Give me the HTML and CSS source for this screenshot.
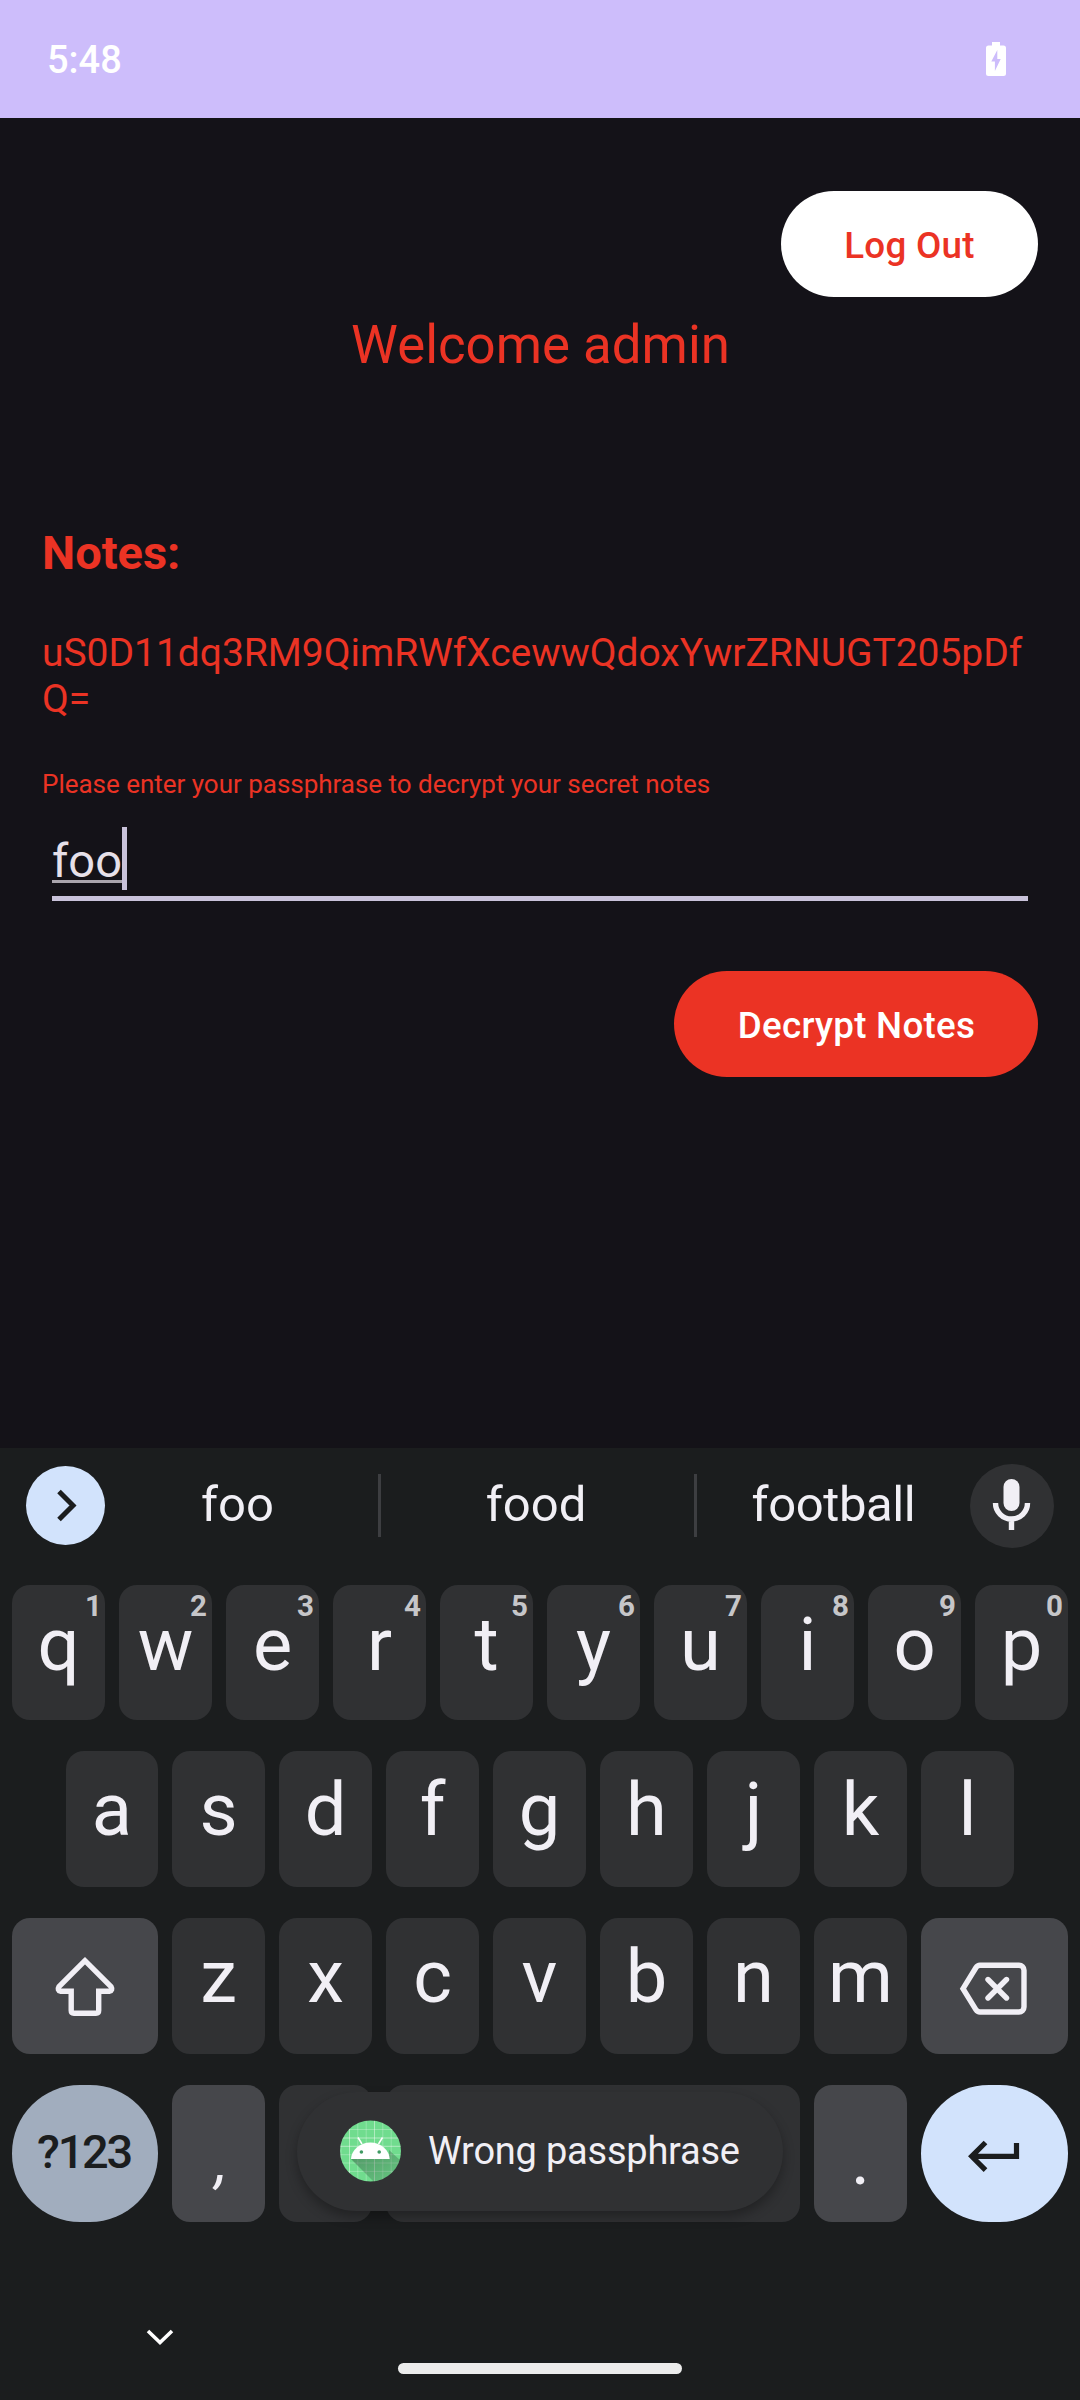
FILE: index.html
```
<!DOCTYPE html>
<html lang="en">
<head>
<meta charset="utf-8">
<title>Notes</title>
<link rel="stylesheet" href="styles.css">
</head>
<body>
<div class="status">
  <span class="clock">5:48</span>
  <svg class="battery" width="20" height="34" viewBox="0 0 20 34"><path fill="#fff" fill-rule="evenodd" d="M6 0h8v3.400h3.500a2.500 2.500 0 0 1 2.500 2.500v25.600a2.500 2.500 0 0 1-2.500 2.500h-15a2.500 2.500 0 0 1-2.500-2.500V5.900a2.500 2.500 0 0 1 2.500-2.500H6zM11.300 8L5.300 19.600h3.600V29l5.800-12h-3.400z"/></svg>
</div>
<main class="app">
  <button class="btn logout">Log Out</button>
  <h1 class="welcome">Welcome admin</h1>
  <h2 class="heading">Notes:</h2>
  <p class="note">uS0D11dq3RM9QimRWfXcewwQdoxYwrZRNUGT205pDfQ=</p>
  <p class="help">Please enter your passphrase to decrypt your secret notes</p>
  <div class="field"><span class="typed">foo</span><span class="caret"></span></div>
  <button class="btn decrypt">Decrypt Notes</button>
</main>
<section class="keyboard">
  <div class="suggest">
    <div class="more"><svg width="79" height="79" viewBox="0 0 79 79"><path d="M33 25.500L47 39.500L33 53.500" fill="none" stroke="#1b1d1e" stroke-width="5"/></svg></div>
    <span class="word w1">foo</span><i class="bar"></i><span class="word w2">food</span><i class="bar"></i><span class="word w3">football</span>
    <div class="mic"><svg width="84" height="84" viewBox="0 0 84 84"><rect x="33.500" y="15" width="16" height="32" rx="8" fill="#f1eff5"/><path d="M25.500 39a16 16 0 0 0 32 0M41.500 55v11" fill="none" stroke="#f1eff5" stroke-width="5.400"/></svg></div>
  </div>
  <div class="row top">
    <div class="key">q<sup>1</sup></div><div class="key">w<sup>2</sup></div><div class="key">e<sup>3</sup></div><div class="key">r<sup>4</sup></div><div class="key">t<sup>5</sup></div><div class="key">y<sup>6</sup></div><div class="key">u<sup>7</sup></div><div class="key">i<sup>8</sup></div><div class="key">o<sup>9</sup></div><div class="key">p<sup>0</sup></div>
  </div>
  <div class="row home">
    <div class="key">a</div><div class="key">s</div><div class="key">d</div><div class="key">f</div><div class="key">g</div><div class="key">h</div><div class="key">j</div><div class="key">k</div><div class="key">l</div>
  </div>
  <div class="row">
    <div class="key mod wide"><svg width="146" height="136" viewBox="0 0 146 136"><path d="M73 42.700L47 68.700q-2 3.500 1.500 4.500H59.200V92.500q0 2.700 2.700 2.700H84q2.700 0 2.700-2.700V73.200H97.500q3.500-1 1.500-4.500z" fill="none" stroke="#f1eff5" stroke-width="5.400"/></svg></div><div class="key">z</div><div class="key">x</div><div class="key">c</div><div class="key">v</div><div class="key">b</div><div class="key">n</div><div class="key">m</div><div class="key mod wide right"><svg width="147" height="136" viewBox="0 0 147 136"><path d="M59 47.300H98a5 5 0 0 1 5 5V89a5 5 0 0 1-5 5H59a5 5 0 0 1-4-2.200L42 70.700l13-21.200a5 5 0 0 1 4-2.200zM67 61.500L85.500 80M85.500 61.500L67 80" fill="none" stroke="#f1eff5" stroke-width="5.400" stroke-linecap="round"/></svg></div>
  </div>
  <div class="row">
    <div class="key wide sym">?123</div><div class="key mod comma">,</div><div class="key"></div><div class="key space"></div><div class="key mod punct">.</div><div class="key wide right enter"><svg width="147" height="137" viewBox="0 0 147 137"><path d="M95.500 58v13.300H52M64.500 57.500L50.700 71.300L64.500 85.100" fill="none" stroke="#1b1d1e" stroke-width="5.200"/></svg></div>
  </div>
  <div class="nav">
    <svg class="hide" width="28" height="18" viewBox="0 0 28 18"><path d="M2 2L14 13.500L26 2" fill="none" stroke="#fff" stroke-width="3.600"/></svg>
    <div class="pill"></div>
  </div>
</section>
<div class="toast">
  <svg class="logo" width="62" height="62" viewBox="0 0 62 62">
    <defs><clipPath id="c"><circle cx="30.500" cy="31" r="30.500"/></clipPath><linearGradient id="g" x1="0" y1="0" x2="1" y2="1"><stop offset="0" stop-color="#2d4a38" stop-opacity=".5"/><stop offset="1" stop-color="#2d4a38" stop-opacity=".12"/></linearGradient></defs>
    <g clip-path="url(#c)"><rect width="62" height="62" fill="#70dc8e"/>
    <path d="M1 0v62M9.500 0v62M17.800 0v62M26.200 0v62M34.500 0v62M42.800 0v62M51.200 0v62M0 9.500h62M0 18h62M0 26.300h62M0 34.700h62M0 43h62M0 51.400h62" stroke="#fff" stroke-opacity=".25"/>
    <path d="M9.500 0v62M34.500 0v62M0 18h62M0 26.300h62" stroke="#fff" stroke-opacity=".25"/>
    <path d="M11 39L36 64H62V42L49 30v9z" fill="url(#g)"/></g>
    <path d="M11 39a19.400 17.700 0 0 1 38.700 0z" fill="#fff"/><path d="M18 17.500l4 6.500M42.500 17.500l-4 6.500" stroke="#fff" stroke-width="1.500"/><circle cx="21.400" cy="32" r="1.800" fill="#3f9a62"/><circle cx="39.200" cy="32" r="1.800" fill="#3f9a62"/>
  </svg>
  <span>Wrong passphrase</span>
</div>
</body>
</html>
```
FILE: styles.css
```
* { box-sizing: border-box; margin: 0; padding: 0; }
body { position: relative; width: 1080px; height: 2400px; overflow: hidden; background: #141218; font-family: Roboto, "Liberation Sans", sans-serif; color: #eb3324; }
svg { display: block; }

.status { display: flex; justify-content: space-between; align-items: center; height: 118px; padding: 0 74px 0 47px; background: #cdbdfb; color: #fff; }
.clock { padding-top: 2px; font-size: 38px; font-weight: 500; line-height: 44px; }

.app { display: flex; flex-direction: column; height: 1330px; padding: 73px 42px 0; }
.btn { align-self: flex-end; height: 106px; padding: 2px 0 0 1px; border: 0; border-radius: 53px; font: 500 36.750px/43px Roboto, sans-serif; letter-spacing: .26px; }
.logout { width: 257px; padding-left: 0; background: #fff; color: #eb3324; }
.decrypt { width: 364px; margin-top: 70px; background: #eb3324; color: #fff; }
.welcome { margin-top: 17px; padding-left: 1px; font-size: 52.800px; font-weight: 400; line-height: 62px; text-align: center; }
.heading { margin-top: 149px; font-size: 47px; font-weight: 700; line-height: 56px; }
.note { margin-top: 49px; font-size: 39px; line-height: 46px; letter-spacing: -.03px; word-break: break-all; }
.help { margin-top: 47px; font-size: 26px; line-height: 31px; letter-spacing: -.02px; }
.field { display: flex; height: 74px; margin: 27px 10px 0; border-bottom: 5px solid #c9c2da; color: #e6e0e9; }
.typed { height: 50px; margin-top: 6px; padding-top: 1px; border-bottom: 3px solid #aaa5ad; font-size: 47px; line-height: 54px; }
.caret { width: 5px; height: 63px; background: #c9c2da; }

.keyboard { display: flex; flex-direction: column; height: 952px; padding: 0 12px; background: #1b1d1e; color: #f1eff5; }
.suggest { display: flex; align-items: center; height: 137px; padding: 0 14px 22px; }
.more { width: 79px; height: 79px; border-radius: 50%; background: #d2e3fc; }
.mic { width: 84px; height: 84px; border-radius: 50%; background: #303133; }
.word { padding-bottom: 2px; font-size: 49px; line-height: 58px; text-align: center; }
.w1 { width: 273px; padding-right: 8px; }
.w2 { width: 313px; padding-right: 3px; }
.w3 { width: 273px; letter-spacing: -.4px; }
.bar { width: 3px; height: 63px; background: #3d3e41; }
.row { display: flex; flex: none; gap: 14px; height: 136px; margin-bottom: 31px; }
.top { height: 135px; }
.home { padding: 0 54px; }
.key { position: relative; flex: 1; height: 136px; border-radius: 18px; background: #303133; font-size: 74px; line-height: 118px; text-align: center; }
.top .key { height: 135px; line-height: 119px; }
.home .key:first-child { flex: 0 0 92px; }
.key sup { position: absolute; top: 4px; right: 5px; font-size: 29.500px; font-weight: 700; line-height: 34px; color: #c6c6c9; }
.key:first-child sup { right: 3px; }
.mod { background: #46474b; }
.wide { flex: 0 0 146px; }
.right { flex-basis: 147px; }
.space { flex: 0 0 414px; }
.row:nth-child(5) .key { height: 137px; }
.sym { padding-right: 2px; border-radius: 68px; background: #a1adbe; color: #1b1d1e; font-size: 47px; font-weight: 500; line-height: 133px; letter-spacing: -2.300px; }
.enter { border-radius: 68px; background: #d2e3fc; }
.row .punct { line-height: 147px; }
.row .comma { text-indent: 6px; font-size: 60px; font-style: italic; line-height: 153px; }
.nav { display: flex; align-items: flex-start; }
.hide { margin: 77px 0 0 134px; }
.pill { width: 284px; height: 11px; margin: 111px 0 0 224px; border-radius: 6px; background: #ececec; }

.toast { position: absolute; left: 297px; top: 2092px; display: flex; align-items: center; width: 486px; height: 119px; padding: 0 0 2px 43px; border-radius: 60px; background: #303133; box-shadow: 0 6px 12px rgba(0,0,0,.3); color: #f1eff5; font-size: 38px; line-height: 46px; }
.toast span { margin-left: 26px; letter-spacing: -.22px; white-space: nowrap; }
```
